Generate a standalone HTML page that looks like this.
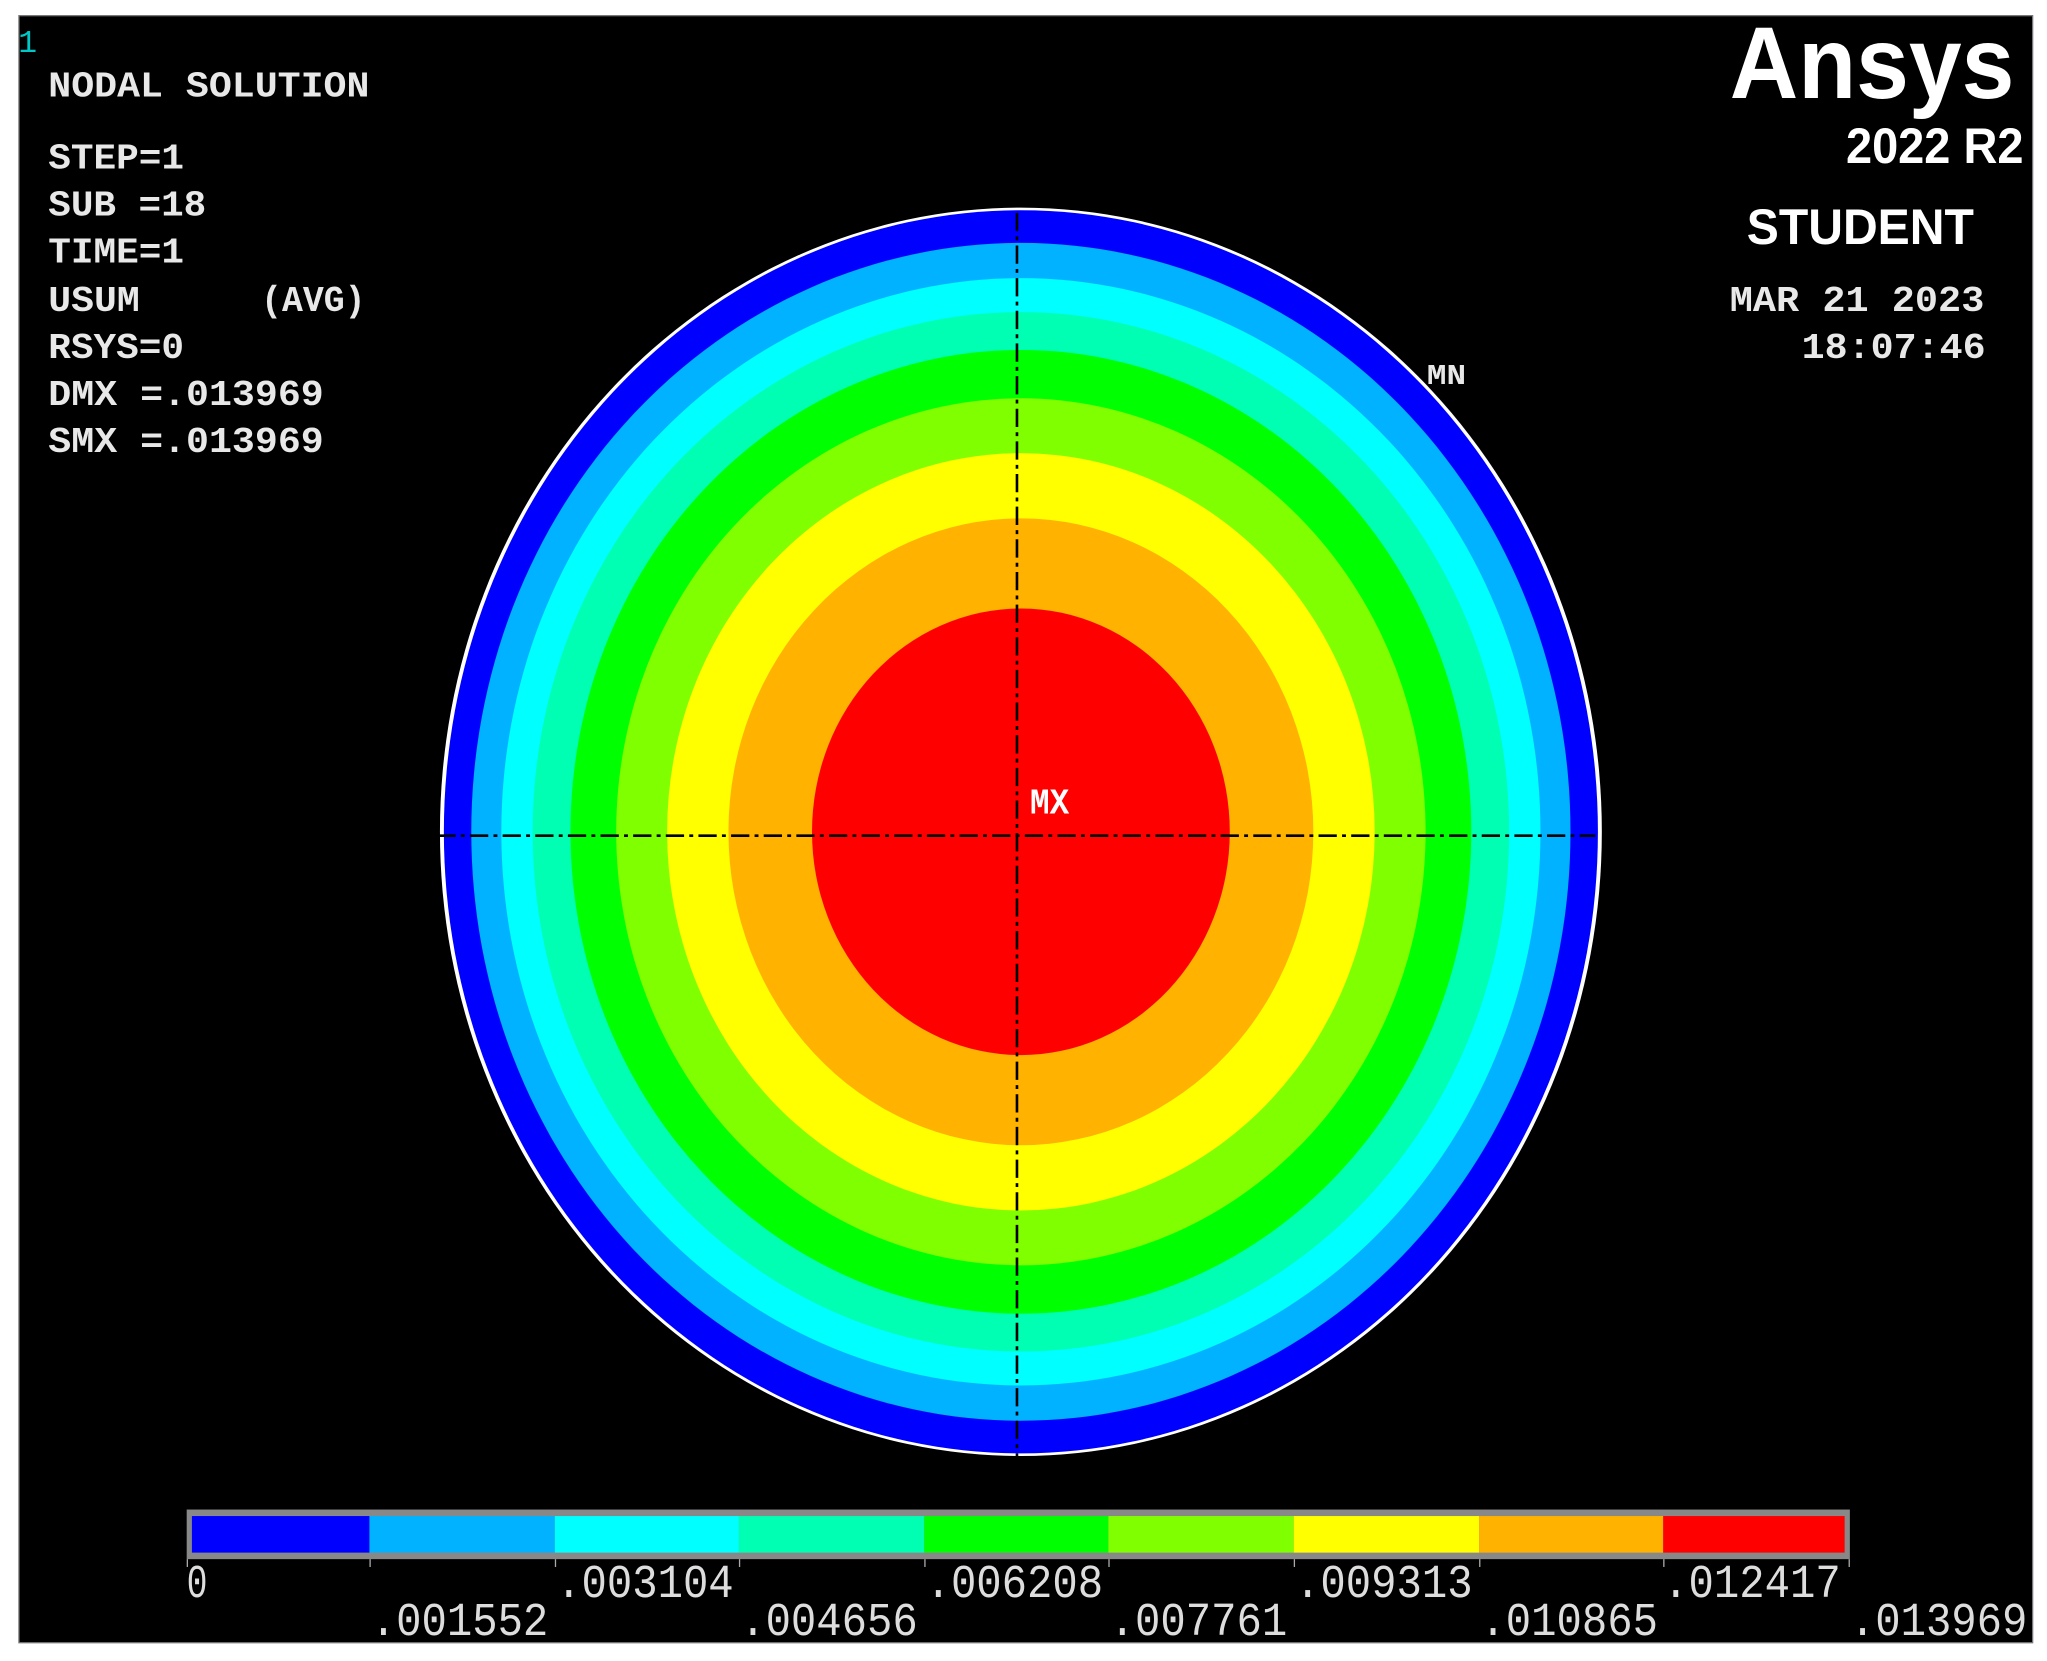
<!DOCTYPE html>
<html><head><meta charset="utf-8"><style>
html,body{margin:0;padding:0;background:#fff;width:2047px;height:1661px;overflow:hidden}
svg{display:block}
.m{font-family:"Liberation Mono",monospace;fill:#e8e8e8;font-size:28px;font-weight:600}
.l{font-family:"Liberation Mono",monospace;fill:#ddd;font-size:36px}
.b{font-family:"Liberation Sans",sans-serif;fill:#fff;font-weight:bold}
</style></head><body>
<svg width="2047" height="1661" viewBox="0 0 1568 1272" preserveAspectRatio="none">
<rect x="0" y="0" width="1568" height="1272" fill="#fff"/>
<rect x="14.5" y="12" width="1542.5" height="1246" fill="#000" stroke="#777" stroke-width="1"/>
<text x="14" y="40" fill="#00c8c8" style="font-family:'Liberation Mono',monospace;font-size:24px">1</text>
<g class="m">
<text x="37" y="74" textLength="246" lengthAdjust="spacingAndGlyphs">NODAL SOLUTION</text>
<text x="37" y="129" textLength="104" lengthAdjust="spacingAndGlyphs">STEP=1</text>
<text x="37" y="165" textLength="121" lengthAdjust="spacingAndGlyphs">SUB =18</text>
<text x="37" y="201" textLength="104" lengthAdjust="spacingAndGlyphs">TIME=1</text>
<text x="37" y="238" textLength="70" lengthAdjust="spacingAndGlyphs">USUM</text>
<text x="200" y="238" textLength="80" lengthAdjust="spacingAndGlyphs">(AVG)</text>
<text x="37" y="274" textLength="104" lengthAdjust="spacingAndGlyphs">RSYS=0</text>
<text x="37" y="310" textLength="211" lengthAdjust="spacingAndGlyphs">DMX =.013969</text>
<text x="37" y="346" textLength="211" lengthAdjust="spacingAndGlyphs">SMX =.013969</text>
<text x="1325" y="238" textLength="195" lengthAdjust="spacingAndGlyphs">MAR 21 2023</text>
<text x="1380" y="274" textLength="141" lengthAdjust="spacingAndGlyphs">18:07:46</text>
<text x="1093" y="294" textLength="30" font-size="22" lengthAdjust="spacingAndGlyphs">MN</text>
</g>
<g transform="translate(782,637)">
<ellipse rx="445" ry="478" fill="#fff"/>
<ellipse rx="442" ry="476" fill="#0000ff"/>
<ellipse rx="421" ry="451" fill="#00b2ff"/>
<ellipse rx="398" ry="424" fill="#00ffff"/>
<ellipse rx="374" ry="398" fill="#00ffb2"/>
<ellipse rx="345" ry="369" fill="#00ff00"/>
<ellipse rx="310" ry="332" fill="#80ff00"/>
<ellipse rx="271" ry="290" fill="#ffff00"/>
<ellipse rx="224" ry="240" fill="#ffb200"/>
<ellipse rx="160" ry="171" fill="#ff0000"/>
</g>
<g stroke="#000" stroke-width="2" stroke-dasharray="14,4,3,4">
<line x1="335" y1="640" x2="1222" y2="640"/>
<line x1="779" y1="163" x2="779" y2="1115"/>
</g>
<text class="m" x="789" y="623" textLength="30" font-size="22" lengthAdjust="spacingAndGlyphs" style="fill:#fff">MX</text>
<text class="b" x="1325" y="75" font-size="78" textLength="218" lengthAdjust="spacingAndGlyphs">Ansys</text>
<text class="b" x="1414" y="125" font-size="38" textLength="136" lengthAdjust="spacingAndGlyphs">2022 R2</text>
<text class="b" x="1338" y="187" font-size="38" textLength="174" lengthAdjust="spacingAndGlyphs">STUDENT</text>
<rect x="143" y="1156" width="1274" height="38" fill="#888"/>
<g>
<rect x="147" y="1161" width="136" height="28" fill="#0000ff"/>
<rect x="283" y="1161" width="142" height="28" fill="#00b2ff"/>
<rect x="425" y="1161" width="141" height="28" fill="#00ffff"/>
<rect x="566" y="1161" width="142" height="28" fill="#00ffb2"/>
<rect x="708" y="1161" width="141" height="28" fill="#00ff00"/>
<rect x="849" y="1161" width="142" height="28" fill="#80ff00"/>
<rect x="991" y="1161" width="142" height="28" fill="#ffff00"/>
<rect x="1133" y="1161" width="141" height="28" fill="#ffb200"/>
<rect x="1274" y="1161" width="139" height="28" fill="#ff0000"/>
</g>
<g stroke="#aaa" stroke-width="1">
<line x1="143.5" y1="1194" x2="143.5" y2="1200"/><line x1="283.5" y1="1194" x2="283.5" y2="1200"/>
<line x1="425.5" y1="1194" x2="425.5" y2="1200"/><line x1="566.5" y1="1194" x2="566.5" y2="1200"/>
<line x1="708.5" y1="1194" x2="708.5" y2="1200"/><line x1="849.5" y1="1194" x2="849.5" y2="1200"/>
<line x1="991.5" y1="1194" x2="991.5" y2="1200"/><line x1="1133.5" y1="1194" x2="1133.5" y2="1200"/>
<line x1="1274.5" y1="1194" x2="1274.5" y2="1200"/><line x1="1416.5" y1="1194" x2="1416.5" y2="1200"/>
</g>
<g class="l">
<text x="143" y="1223" textLength="16" lengthAdjust="spacingAndGlyphs">0</text>
<text x="426" y="1223" textLength="136" lengthAdjust="spacingAndGlyphs">.003104</text>
<text x="709" y="1223" textLength="136" lengthAdjust="spacingAndGlyphs">.006208</text>
<text x="992" y="1223" textLength="136" lengthAdjust="spacingAndGlyphs">.009313</text>
<text x="1274" y="1223" textLength="136" lengthAdjust="spacingAndGlyphs">.012417</text>
<text x="284" y="1252" textLength="136" lengthAdjust="spacingAndGlyphs">.001552</text>
<text x="567" y="1252" textLength="136" lengthAdjust="spacingAndGlyphs">.004656</text>
<text x="850" y="1252" textLength="136" lengthAdjust="spacingAndGlyphs">.007761</text>
<text x="1134" y="1252" textLength="136" lengthAdjust="spacingAndGlyphs">.010865</text>
<text x="1417" y="1252" textLength="136" lengthAdjust="spacingAndGlyphs">.013969</text>
</g>
</svg>
</body></html>
